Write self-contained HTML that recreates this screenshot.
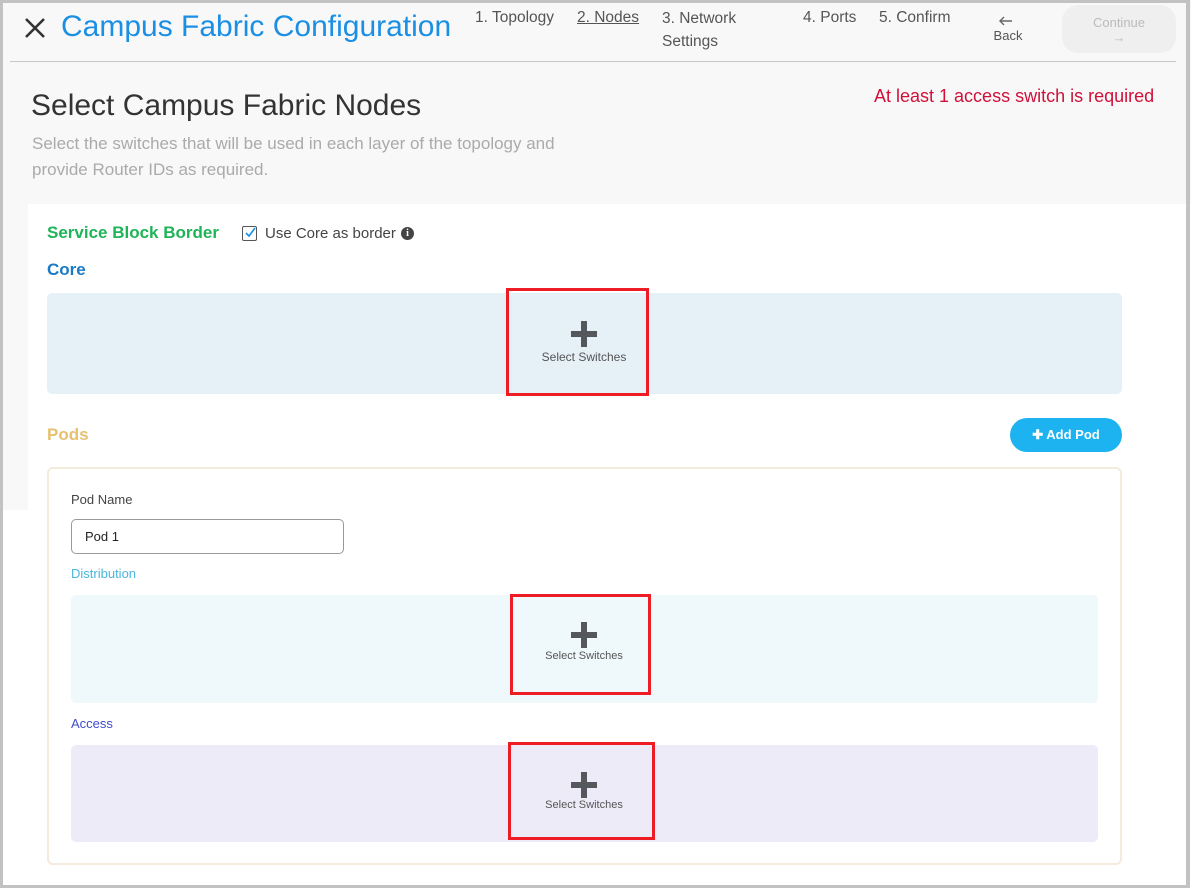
<!DOCTYPE html>
<html><head><style>
*{box-sizing:border-box;margin:0;padding:0}
body{width:1191px;height:889px;background:#fff;font-family:"Liberation Sans",sans-serif;position:relative;overflow:hidden}
.frame{position:absolute;left:0;top:0;width:1190px;height:888px;border:3px solid #c2c2c2;border-right-width:4px}
.a{position:absolute}
.gray{background:#f8f8f8}
.box{position:absolute;border-radius:5px}
.sel{position:absolute;border:3px solid #ee1c25}
.ct{position:absolute;left:0;width:1168px;text-align:center;color:#555}
.plus{position:absolute;width:26px;height:26px}
.plus:before{content:"";position:absolute;left:10px;top:0;width:6px;height:26px;background:#54585c}
.plus:after{content:"";position:absolute;left:0;top:10px;width:26px;height:6px;background:#54585c}
.nav{position:absolute;top:9px;font-size:15.5px;color:#555}
</style></head><body>
<div class="a gray" style="left:0;top:0;width:1191px;height:204px"></div>
<div class="a gray" style="left:0;top:204px;width:28px;height:306px"></div>
<div class="a" style="left:10px;top:61px;width:1166px;height:1px;background:#c8c8c8"></div>
<svg class="a" style="left:24px;top:17px" width="22" height="22" viewBox="0 0 22 22"><path d="M2 2L20 20M20 2L2 20" stroke="#333" stroke-width="2.6"/></svg>
<div class="a" style="left:61px;top:10px;font-size:30px;color:#1a8fe3">Campus Fabric Configuration</div>
<div class="nav" style="left:475px">1. Topology</div>
<div class="nav" style="left:577px;text-decoration:underline">2. Nodes</div>
<div class="nav" style="left:662px;line-height:23px;top:7px">3. Network<br>Settings</div>
<div class="nav" style="left:803px">4. Ports</div>
<div class="nav" style="left:879px">5. Confirm</div>
<svg class="a" style="left:999px;top:16px" width="14" height="10"><path d="M13 5H1M5 1L1 5L5 9" stroke="#666" stroke-width="1.4" fill="none"/></svg>
<div class="a" style="left:986px;top:28px;width:44px;text-align:center;font-size:13px;color:#555">Back</div>
<div class="a" style="left:1062px;top:5px;width:114px;height:48px;border-radius:16px;background:#efefef;color:#bbb;font-size:13px;text-align:center;padding-top:10px;line-height:15px">Continue<br>→</div>
<div class="a" style="left:31px;top:89px;font-size:30px;color:#333">Select Campus Fabric Nodes</div>
<div class="a" style="left:32px;top:131px;font-size:17px;color:#aaa;line-height:26px">Select the switches that will be used in each layer of the topology and<br>provide Router IDs as required.</div>
<div class="a" style="left:874px;top:86px;font-size:18px;color:#d0103a">At least 1 access switch is required</div>

<div class="a" style="left:47px;top:223px;font-size:17px;font-weight:bold;color:#1fb457">Service Block Border</div>
<div class="a" style="left:242px;top:226px;width:15px;height:15px;border:1px solid #555;border-radius:2px"></div>
<svg class="a" style="left:244px;top:227px" width="12" height="12"><path d="M2 6l3 3 6-8" stroke="#1a8fe3" stroke-width="1.6" fill="none"/></svg>
<div class="a" style="left:265px;top:225px;font-size:15px;color:#444">Use Core as border</div>
<div class="a" style="left:401px;top:227px;width:13px;height:13px;border-radius:50%;background:#444;color:#fff;font-size:10px;font-weight:bold;text-align:center;line-height:13px;font-family:serif">i</div>
<div class="a" style="left:47px;top:260px;font-size:17px;font-weight:bold;color:#1a7bc4">Core</div>
<div class="box" style="left:47px;top:293px;width:1075px;height:101px;background:#e6f0f7"></div>
<div class="sel" style="left:506px;top:288px;width:143px;height:108px"></div>
<div class="plus" style="left:571px;top:321px"></div>
<div class="ct" style="top:350px;font-size:12px">Select Switches</div>

<div class="a" style="left:47px;top:425px;font-size:17px;font-weight:bold;color:#e7c16f">Pods</div>
<div class="a" style="left:1010px;top:418px;width:112px;height:34px;border-radius:17px;background:#1db3f0;color:#fff;font-weight:bold;font-size:13px;text-align:center;line-height:34px">✚ Add Pod</div>
<div class="box" style="left:47px;top:467px;width:1075px;height:398px;border:2px solid #f3ebdc;border-radius:6px"></div>
<div class="a" style="left:71px;top:492px;font-size:13px;color:#444">Pod Name</div>
<div class="a" style="left:71px;top:519px;width:273px;height:35px;border:1px solid #999;border-radius:5px;font-size:13px;color:#222;padding:9px 13px">Pod 1</div>
<div class="a" style="left:71px;top:566px;font-size:13px;color:#4ab6dc">Distribution</div>
<div class="box" style="left:71px;top:595px;width:1027px;height:108px;background:#eff8fb"></div>
<div class="sel" style="left:510px;top:594px;width:141px;height:101px"></div>
<div class="plus" style="left:571px;top:622px"></div>
<div class="ct" style="top:650px;font-size:11px">Select Switches</div>
<div class="a" style="left:71px;top:716px;font-size:13px;color:#3f4ccd">Access</div>
<div class="box" style="left:71px;top:745px;width:1027px;height:97px;background:#edebf8"></div>
<div class="sel" style="left:508px;top:742px;width:147px;height:98px"></div>
<div class="plus" style="left:571px;top:772px"></div>
<div class="ct" style="top:799px;font-size:11px">Select Switches</div>
<div class="frame"></div>
</body></html>
